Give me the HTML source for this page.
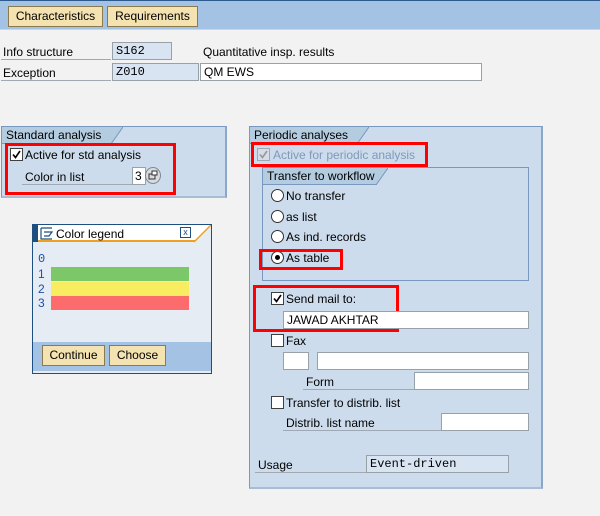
<!DOCTYPE html>
<html><head><meta charset="utf-8"><style>
*{margin:0;padding:0;box-sizing:border-box}
body{width:600px;height:516px;background:#f2f2f2;font-family:"Liberation Sans",Arial,sans-serif;font-size:12px;color:#000;position:relative;overflow:hidden}
.a{position:absolute}
.btn{position:absolute;background:#f4e2b0;border:1px solid #8a7a50;height:21px;line-height:19px;text-align:center;font-size:12px}
.lbl{position:absolute;height:18px;line-height:17px;padding-top:2px;border-bottom:1px solid #a0a8b4;padding-left:2px}
.fld{position:absolute;height:18px;border:1px solid #98a0a8;background:#fff;line-height:16px;padding-left:3px}
.ro{background:#d8e4f2;font-family:"Liberation Mono",monospace}
.box{position:absolute;background:#cddcec;border:1px solid #7898c0;border-right:2px solid #8aa6c8;border-bottom:2px solid #a8bcd4}
.tab{position:absolute;height:17px;line-height:16px;padding-left:4px;background:#b4cce0;border-bottom:1px solid #7898c0}
.red{position:absolute;border:3px solid #f00}
.cb{position:absolute;width:13px;height:13px;border:1px solid #404040;background:#fff}
.rb{position:absolute;width:13px;height:13px;border:1px solid #303030;border-radius:50%;background:#fff}
.t{position:absolute;line-height:14px}
</style></head><body>
<div class="a" style="left:0;top:0;width:600px;height:30px;background:#a4c2e4;border-top:1px solid #2c5a8c;border-bottom:1px solid #c8d8ec"></div>
<div class="btn" style="left:8px;top:6px;width:95px">Characteristics</div>
<div class="btn" style="left:107px;top:6px;width:91px">Requirements</div>

<div class="lbl" style="left:1px;top:42px;width:110px">Info structure</div>
<div class="fld ro" style="left:112px;top:42px;width:60px">S162</div>
<div class="t" style="left:203px;top:45px">Quantitative insp. results</div>
<div class="lbl" style="left:1px;top:63px;width:110px">Exception</div>
<div class="fld ro" style="left:112px;top:63px;width:87px">Z010</div>
<div class="fld" style="left:200px;top:63px;width:282px">QM EWS</div>

<div class="box" style="left:1px;top:126px;width:226px;height:72px"></div>
<div class="tab" style="left:2px;top:127px;width:110px">Standard analysis</div>
<svg class="a" style="left:111px;top:127px" width="12" height="17"><polygon points="0,0 12,0 0,17" fill="#b4cce0"/><line x1="12" y1="0" x2="0" y2="17" stroke="#7898c0"/></svg>
<div class="red" style="left:5px;top:143px;width:171px;height:52px"></div>
<div class="cb" style="left:10px;top:148px"><svg width="11" height="11"><path d="M2 5.5 L4.5 8.5 L9 2" stroke="#000" stroke-width="1.6" fill="none"/></svg></div>
<div class="t" style="left:25px;top:148px">Active for std analysis</div>
<div class="lbl" style="left:22px;top:167px;width:110px;padding-left:3px">Color in list</div>
<div class="fld" style="left:132px;top:167px;width:14px;padding-left:2px">3</div>
<div class="a" style="left:145px;top:167px;width:16px;height:17px;border-radius:50%;background:#d8dce0;border:1px solid #808890"><svg width="14" height="15"><rect x="3" y="6" width="6" height="5" fill="none" stroke="#333"/><rect x="6" y="3" width="5" height="4" fill="#fff" stroke="#333"/></svg></div>

<div class="a" style="left:32px;top:224px;width:180px;height:150px;background:#e6ecf4;border:1px solid #1f4e80"></div>
<div class="a" style="left:33px;top:225px;width:178px;height:17px;background:#fff;border-bottom:2px solid #f0a020"></div>
<div class="a" style="left:33px;top:225px;width:5px;height:17px;background:#1f4e80"></div>
<svg class="a" style="left:40px;top:227px" width="14" height="13"><path d="M1 1 H12 M1 1 V12 H12 M4 5 H12 L9 9 H4" stroke="#1f4e80" fill="none" stroke-width="1.2"/></svg>
<div class="t" style="left:56px;top:227px;font-size:12px">Color legend</div>
<div class="a" style="left:180px;top:227px;width:11px;height:11px;border:1px solid #1f4e80;font-size:9px;line-height:9px;text-align:center;color:#1f4e80">x</div>
<svg class="a" style="left:193px;top:225px" width="18" height="18"><polygon points="18,0 18,18 0,18" fill="#e6ecf4"/><line x1="18" y1="0" x2="1" y2="17" stroke="#f0a020" stroke-width="1.5"/></svg>
<div class="t" style="left:38px;top:252px;font-family:'Liberation Mono',monospace;color:#2050a0">0</div>
<div class="t" style="left:38px;top:267px;color:#2050a0">1</div>
<div class="t" style="left:38px;top:282px;color:#2050a0">2</div>
<div class="t" style="left:38px;top:296px;color:#2050a0">3</div>
<div class="a" style="left:51px;top:267px;width:138px;height:14px;background:#7cc868"></div>
<div class="a" style="left:51px;top:282px;width:138px;height:14px;background:#f8ec60"></div>
<div class="a" style="left:51px;top:296px;width:138px;height:14px;background:#fc6c6c"></div>
<div class="a" style="left:33px;top:342px;width:178px;height:29px;background:#a4c2e4"></div>
<div class="btn" style="left:42px;top:345px;width:63px">Continue</div>
<div class="btn" style="left:109px;top:345px;width:57px">Choose</div>

<div class="box" style="left:249px;top:126px;width:294px;height:363px"></div>
<div class="tab" style="left:250px;top:127px;width:108px">Periodic analyses</div>
<svg class="a" style="left:357px;top:127px" width="12" height="17"><polygon points="0,0 12,0 0,17" fill="#b4cce0"/><line x1="12" y1="0" x2="0" y2="17" stroke="#7898c0"/></svg>
<div class="red" style="left:251px;top:142px;width:177px;height:25px"></div>
<div class="cb" style="left:257px;top:148px;border-color:#a0a8b0;background:#d8dce4"><svg width="11" height="11"><path d="M2 5.5 L4.5 8.5 L9 2" stroke="#909aa4" stroke-width="1.6" fill="none"/></svg></div>
<div class="t" style="left:273px;top:148px;color:#8098b8">Active for periodic analysis</div>

<div class="a" style="left:262px;top:167px;width:267px;height:114px;border:1px solid #7898c0"></div>
<div class="tab" style="left:263px;top:168px;width:114px">Transfer to workflow</div>
<svg class="a" style="left:376px;top:168px" width="12" height="17"><polygon points="0,0 12,0 0,17" fill="#b4cce0"/><line x1="12" y1="0" x2="0" y2="17" stroke="#7898c0"/></svg>
<div class="rb" style="left:271px;top:189px"></div><div class="t" style="left:286px;top:189px">No transfer</div>
<div class="rb" style="left:271px;top:210px"></div><div class="t" style="left:286px;top:210px">as list</div>
<div class="rb" style="left:271px;top:230px"></div><div class="t" style="left:286px;top:230px">As ind. records</div>
<div class="rb" style="left:271px;top:251px"><div class="a" style="left:3px;top:3px;width:5px;height:5px;border-radius:50%;background:#000"></div></div><div class="t" style="left:286px;top:251px">As table</div>
<div class="red" style="left:259px;top:249px;width:84px;height:21px"></div>

<div class="red" style="left:253px;top:285px;width:146px;height:47px"></div>
<div class="cb" style="left:271px;top:292px"><svg width="11" height="11"><path d="M2 5.5 L4.5 8.5 L9 2" stroke="#000" stroke-width="1.6" fill="none"/></svg></div>
<div class="t" style="left:286px;top:292px">Send mail to:</div>
<div class="fld" style="left:283px;top:311px;width:246px">JAWAD AKHTAR</div>
<div class="cb" style="left:271px;top:334px"></div><div class="t" style="left:286px;top:334px">Fax</div>
<div class="fld" style="left:283px;top:352px;width:26px"></div>
<div class="fld" style="left:317px;top:352px;width:212px"></div>
<div class="lbl" style="left:303px;top:372px;width:111px;padding-left:3px">Form</div>
<div class="fld" style="left:414px;top:372px;width:115px"></div>
<div class="cb" style="left:271px;top:396px"></div><div class="t" style="left:286px;top:396px">Transfer to distrib. list</div>
<div class="lbl" style="left:283px;top:413px;width:158px;padding-left:3px">Distrib. list name</div>
<div class="fld" style="left:441px;top:413px;width:88px"></div>
<div class="lbl" style="left:255px;top:455px;width:111px;padding-left:3px">Usage</div>
<div class="fld ro" style="left:366px;top:455px;width:143px">Event-driven</div>
</body></html>
